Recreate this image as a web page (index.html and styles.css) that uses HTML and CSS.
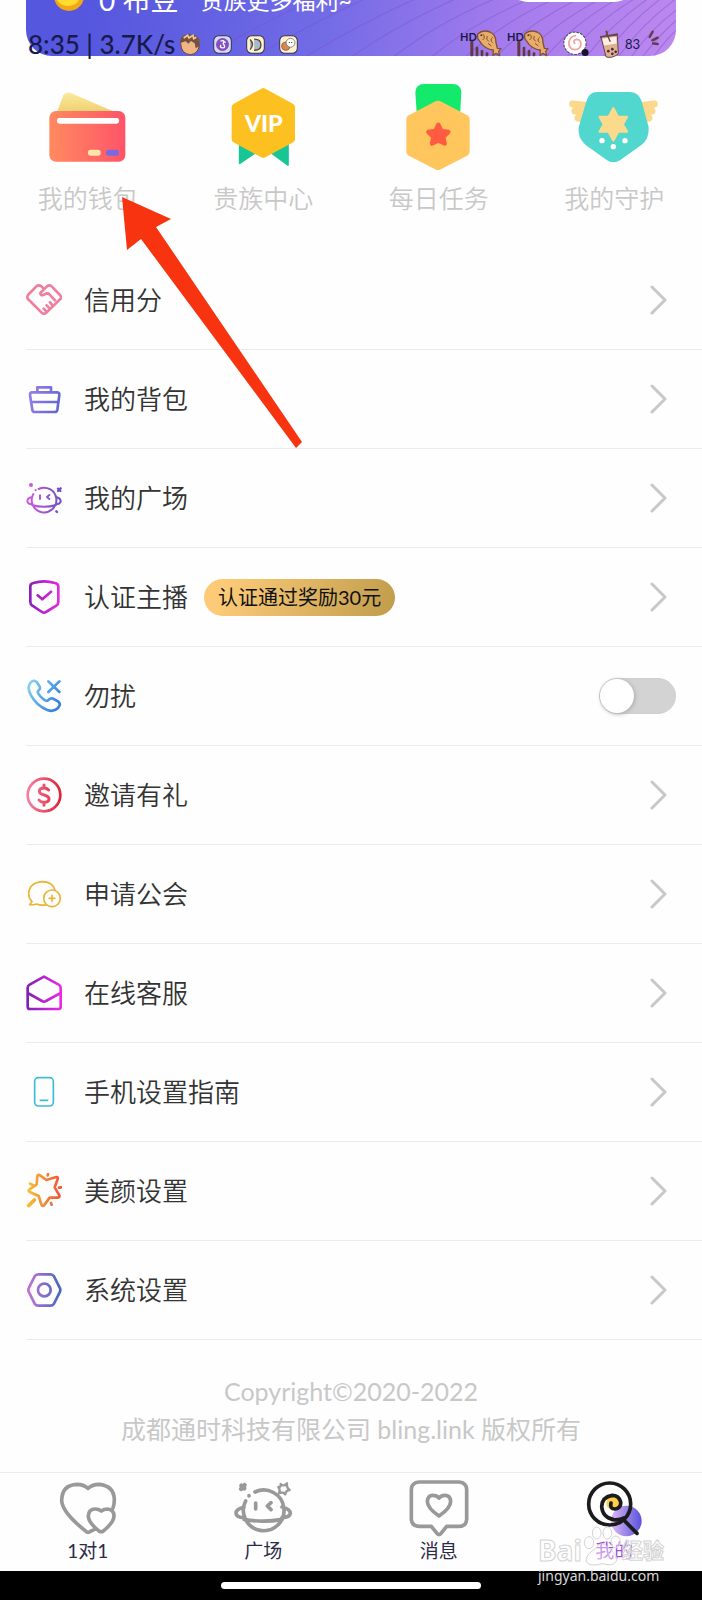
FILE: index.html
```
<!DOCTYPE html>
<html lang="zh-CN">
<head>
    <meta charset="UTF-8">
    <meta name="viewport" content="width=device-width, initial-scale=1.0">
    <title>我的</title>
    <link rel="stylesheet" href="styles.css">
</head>
<body>
    <!-- shared gradients for the row icons -->
    <svg class="defs" width="0" height="0" aria-hidden="true">
        <defs>
            <linearGradient id="g-blue" gradientUnits="userSpaceOnUse" x1="0" y1="0" x2="108" y2="40"><stop stop-color="#a384ec"/><stop offset="1" stop-color="#6468d2"/></linearGradient>
            <linearGradient id="g-planet" gradientUnits="userSpaceOnUse" x1="0" y1="0" x2="108" y2="0"><stop stop-color="#d25fdc"/><stop offset="1" stop-color="#6b4fc0"/></linearGradient>
            <linearGradient id="g-magenta" gradientUnits="userSpaceOnUse" x1="0" y1="0" x2="108" y2="0"><stop stop-color="#7d1fb4"/><stop offset="1" stop-color="#ee2be6"/></linearGradient>
            <linearGradient id="g-call" gradientUnits="userSpaceOnUse" x1="0" y1="0" x2="108" y2="60"><stop stop-color="#8fdcf2"/><stop offset="1" stop-color="#347fe0"/></linearGradient>
            <linearGradient id="g-red" gradientUnits="userSpaceOnUse" x1="0" y1="0" x2="108" y2="0"><stop stop-color="#f583a8"/><stop offset="1" stop-color="#dc2030"/></linearGradient>
            <linearGradient id="g-fire" gradientUnits="userSpaceOnUse" x1="0" y1="0" x2="108" y2="0"><stop stop-color="#f6c534"/><stop offset="1" stop-color="#f0503c"/></linearGradient>
            <linearGradient id="g-hex" gradientUnits="userSpaceOnUse" x1="0" y1="0" x2="108" y2="0"><stop stop-color="#cc70d8"/><stop offset="1" stop-color="#3f68bd"/></linearGradient>
            <linearGradient id="g-card" x1="0" y1="0" x2="1" y2="0"><stop stop-color="#ff8a60"/><stop offset="1" stop-color="#ff5468"/></linearGradient>
            <linearGradient id="g-paper" x1="0" y1="0" x2="0" y2="1"><stop stop-color="#fbea9a"/><stop offset="1" stop-color="#efce70"/></linearGradient>
            <linearGradient id="g-ball" x1="0" y1="0" x2="1" y2="0"><stop stop-color="#dcb8f6"/><stop offset="1" stop-color="#5a52dc"/></linearGradient>
            <symbol id="chevron" viewBox="0 0 18 32"><path d="M2 3l13 13L2 29" fill="none" stroke="#c8c8c8" stroke-width="3" stroke-linecap="round" stroke-linejoin="round"/></symbol>
            <symbol id="fish" viewBox="0 0 126 84">
                <g fill="#613943"><rect x="31" y="32" width="9" height="47" rx="3"/><rect x="47" y="50" width="8" height="29" rx="3"/><rect x="62" y="60" width="8" height="19" rx="3"/><rect x="77" y="67" width="8" height="12" rx="3"/></g>
                <path d="M53 12Q68-2 90 6Q108 14 108 38L112 55L123 56L116 64L119 77L108 70L99 76L100 60Q80 58 66 43L53 25Z" fill="#e8ae69" stroke="#805037" stroke-width="4" stroke-linejoin="round"/>
                <path d="M68 12q10 9 0 18M82 18q-6 10 4 16M98 22q-10 8 0 16M84 40l10 8" fill="none" stroke="#805037" stroke-width="3"/>
                <circle cx="64" cy="16" r="3" fill="#543028"/>
            </symbol>
        </defs>
    </svg>

    <header class="hero">
        <svg class="hero-lines" viewBox="0 0 649 56" preserveAspectRatio="xMaxYMax slice" aria-hidden="true">
            <g fill="none" stroke="#7b4fc4" stroke-opacity=".45" stroke-width="1">
                <path d="M180 56Q240 20 300-6M230 56Q290 20 350-6M280 56Q340 20 400-6M326 56Q375 22 440-6M368 56Q415 20 480-6M406 56Q450 20 515-6M440 56Q480 18 540-6M470 56Q505 20 562-6M497 56Q530 20 584-6M520 56Q550 20 600-6M541 56Q570 20 616-6M560 56Q586 22 628-6M577 56Q602 22 640-6M592 56Q615 24 650-2M605 56Q625 28 652 8M616 56Q635 32 652 18M627 56Q642 36 652 28"/>
            </g>
        </svg>
        <div class="balance">
            <svg class="coin" viewBox="0 0 32 32" aria-hidden="true"><circle cx="16" cy="16" r="15" fill="#f3a813"/><circle cx="15" cy="13" r="13" fill="#ffdc2e"/></svg>
            <span class="balance-amount">0 布豆</span>
            <span class="balance-tip">贵族更多福利~</span>
            <a class="balance-link" href="#" aria-label="贵族"></a>
        </div>
        <div class="status">
            <span class="status-text">8:35 | 3.7K/s</span>
            <svg class="status-app" viewBox="0 0 66 70" aria-hidden="true"><path d="M5 33Q2 8 30 8Q64 5 61 38Q58 65 34 67Q6 65 5 33Z" fill="#efb583" stroke="#6d493d" stroke-width="3"/><path d="M4 32Q4 10 24 9L30 3L33 9Q64 8 60 42L50 48L47 33L36 26L28 34L20 27Z" fill="#75513f"/><path d="M14 17l12-8 4 8 12-8 2 10 8-4" fill="none" stroke="#f1cb91" stroke-width="5"/></svg>
            <svg class="status-app small" viewBox="0 0 56 56" aria-hidden="true"><rect x="2" y="2" width="52" height="52" rx="15" fill="#d5daf1" stroke="#343451" stroke-width="3"/><circle cx="28" cy="28" r="19" fill="#854dc4"/><path d="M22 18q14-5 8 7q10 13-3 13q-9-2-3-9M32 18l5 5" fill="none" stroke="#fff" stroke-width="4"/></svg>
            <svg class="status-app small" viewBox="0 0 56 56" aria-hidden="true"><rect x="2" y="2" width="52" height="52" rx="15" fill="#fff1cd" stroke="#343451" stroke-width="3"/><path d="M12 13q14 14 0 30M24 12q20 0 20 17t-20 16" fill="#a9bbc2" stroke="#4a4942" stroke-width="4"/></svg>
            <svg class="status-app small" viewBox="0 0 56 56" aria-hidden="true"><rect x="2" y="2" width="52" height="52" rx="15" fill="#fff1cd" stroke="#343451" stroke-width="3"/><circle cx="20" cy="33" r="12" fill="#dc8750" stroke="#5e4438" stroke-width="2"/><circle cx="34" cy="23" r="13" fill="#fff" stroke="#5e5952" stroke-width="2"/><path d="M29 22h3M36 22h3" stroke="#333" stroke-width="3"/></svg>
            <span class="signal"><b>HD</b><svg viewBox="0 0 126 84" aria-hidden="true"><use href="#fish"/></svg></span>
            <span class="signal"><b>HD</b><svg viewBox="0 0 126 84" aria-hidden="true"><use href="#fish"/></svg></span>
            <svg class="status-wifi" viewBox="0 0 80 80" aria-hidden="true"><circle cx="37" cy="38" r="32" fill="#fff" stroke="#4b4770" stroke-width="3" stroke-dasharray="8 3"/><path d="M37 40q-8-10 4-13q14 0 13 15q-3 15-19 14q-18-4-15-23q5-17 20-17" fill="none" stroke="#f0a4a4" stroke-width="5"/><circle cx="66" cy="64" r="10" fill="#171527"/></svg>
            <svg class="status-battery" viewBox="0 0 66 86" aria-hidden="true"><path d="M6 21L60 12M28 15L25 2" stroke="#674452" stroke-width="6"/><path d="M9 21L58 15L61 71Q42 86 24 80Z" fill="#ddb191" stroke="#674452" stroke-width="3"/><path d="M13 26L55 20L56 40L18 46Z" fill="#fff0e4"/><path d="M29 17l8 18" stroke="#674452" stroke-width="4"/><g fill="#4b2b2c"><circle cx="31" cy="63" r="4"/><circle cx="43" cy="57" r="4"/><circle cx="43" cy="71" r="4"/><circle cx="53" cy="65" r="4"/></g></svg>
            <span class="status-percent">83</span>
            <svg class="status-charge" viewBox="0 0 36 48" aria-hidden="true"><path d="M5 21L14 5M13 31L29 23M15 40L29 42" stroke="#5f3b4c" stroke-width="7" stroke-linecap="round"/></svg>
        </div>
    </header>

    <nav class="quick">
        <a href="#">
            <svg viewBox="0 0 288 288" aria-hidden="true">
                <path d="M50 100L70 46Q76 34 92 39L230 98Z" fill="url(#g-paper)"/>
                <rect x="28" y="93" width="228" height="152" rx="20" fill="url(#g-card)"/>
                <rect x="51" y="114" width="186" height="17" rx="7" fill="#fff"/>
                <rect x="144" y="209" width="38" height="18" rx="8" fill="#ffe5a8"/>
                <rect x="198" y="209" width="39" height="18" rx="8" fill="#7c68e2"/>
            </svg>
            <span>我的钱包</span>
        </a>
        <a href="#">
            <svg viewBox="0 0 288 288" aria-hidden="true">
                <path d="M74 180V250L124 216ZM168 218L219 255V180Z" fill="#17c694" stroke="#17c694" stroke-width="5" stroke-linejoin="round"/>
                <path d="M145 34L230 81V178L145 224L60 178V81Z" fill="#fcc121" stroke="#fcc121" stroke-width="20" stroke-linejoin="round"/>
                <text x="146" y="157" class="vip">VIP</text>
            </svg>
            <span>贵族中心</span>
        </a>
        <a href="#">
            <svg viewBox="0 0 288 288" aria-hidden="true">
                <path d="M73 38Q74 12 99 12H185Q210 12 211 38L207 110H78Z" fill="#13e96b"/>
                <path d="M141 78L220 119V214L141 254L62 214V119Z" fill="#ffc65e" stroke="#ffc65e" stroke-width="32" stroke-linejoin="round"/>
                <path d="M142 134l9 19 21 3-15 15 4 20-19-9-19 9 4-20-15-15 21-3z" fill="#ff5b40" stroke="#ff5b40" stroke-width="13" stroke-linejoin="round"/>
            </svg>
            <span>每日任务</span>
        </a>
        <a href="#">
            <svg viewBox="0 0 288 288" aria-hidden="true">
                <g stroke="#fbd88a" stroke-width="21" stroke-linecap="round"><path d="M20 72L66 77M27 93L60 97M36 114L52 117M265 72L220 77M258 93L226 97M249 114L233 117"/></g>
                <path d="M94 36H190Q218 36 227 64L248 142Q250 178 226 195L164 239Q142 254 121 239L59 195Q34 174 38 142L61 64Q69 36 94 36Z" fill="#51d7ce"/>
                <path d="M142 85l14 26h27l-13 22 13 22h-27l-14 26-14-26h-27l13-22-13-22h27z" fill="#fcda8b" stroke="#fcda8b" stroke-width="7" stroke-linejoin="round"/>
                <g fill="#fff"><circle cx="108" cy="182" r="8"/><circle cx="142" cy="200" r="8"/><circle cx="177" cy="182" r="8"/></g>
            </svg>
            <span>我的守护</span>
        </a>
    </nav>

    <ul class="menu">
        <li><a class="row" href="#">
            <svg class="icon" viewBox="0 0 108 108" stroke="#ee7f9e" aria-hidden="true"><path d="M54 20L46 13Q38 7 31 13L6 39Q2 45 6 51L47 92Q54 98 61 92L103 51Q108 45 102 39L77 13Q70 7 63 13L43 33Q43 41 52 39L62 34L68 35L87 55M72 61L80 71M62 70L71 80M53 80L61 89"/></svg>
            <span class="title">信用分</span>
            <svg class="arrow"><use href="#chevron"/></svg>
        </a></li>
        <li><a class="row" href="#">
            <svg class="icon" viewBox="0 0 108 108" stroke="url(#g-blue)" aria-hidden="true"><path d="M34 34V19H75V34M18 34H92Q101 34 100 42L94 87Q93 93 86 93H26Q20 93 19 87L12 42Q12 34 18 34ZM15 63H96"/></svg>
            <span class="title">我的背包</span>
            <svg class="arrow"><use href="#chevron"/></svg>
        </a></li>
        <li><a class="row" href="#">
            <svg class="icon" viewBox="0 0 108 108" stroke="url(#g-planet)" aria-hidden="true"><path stroke-width="6" d="M38 27A37 37 0 1 1 22 42M18 75Q54 86 90 75M19 50Q3 54 4 65Q8 74 19 73M89 50Q105 54 104 65Q100 74 89 73M42 46V57M70 45L63 51L70 57M29 30L29 31"/><path d="M13 13l4 4M17 13l-4 4M96 26l7 7M104 25l-8 8M91 94l2 2" stroke-width="7"/></svg>
            <span class="title">我的广场</span>
            <svg class="arrow"><use href="#chevron"/></svg>
        </a></li>
        <li><a class="row" href="#">
            <svg class="icon" viewBox="0 0 108 108" stroke="url(#g-magenta)" aria-hidden="true"><path d="M22 12Q54 2 87 12Q96 14 97 22V68Q97 76 91 80L60 99Q54 103 48 99L19 80Q13 76 13 68V22Q13 14 22 12ZM35 49L49 61L75 38"/></svg>
            <span class="title">认证主播</span>
            <span class="badge">认证通过奖励30元</span>
            <svg class="arrow"><use href="#chevron"/></svg>
        </a></li>
        <li><label class="row" for="dnd">
            <svg class="icon" viewBox="0 0 108 108" stroke="url(#g-call)" aria-hidden="true"><path d="M13 15Q23 3 32 12L40 24Q45 32 37 38Q31 43 47 59Q59 71 65 68Q73 58 83 63L96 70Q107 78 96 90Q83 103 64 96Q32 83 15 52Q2 28 13 15ZM67 10L100 42M100 10L67 42"/></svg>
            <span class="title">勿扰</span>
            <input class="switch" type="checkbox" id="dnd">
        </label></li>
        <li><a class="row" href="#">
            <svg class="icon" viewBox="0 0 108 108" stroke="url(#g-red)" aria-hidden="true"><circle cx="54" cy="54" r="49"/><path stroke-width="9" d="M68 39Q62 33 54 33Q40 33 40 43Q40 51 54 54Q69 58 69 66Q69 76 54 76Q44 76 39 69M54 24V33M54 76V85"/></svg>
            <span class="title">邀请有礼</span>
            <svg class="arrow"><use href="#chevron"/></svg>
        </a></li>
        <li><a class="row" href="#">
            <svg class="icon thin" viewBox="0 0 108 108" stroke="#e8b535" aria-hidden="true"><path d="M87 43Q80 17 48 17Q10 20 8 53Q8 66 18 77L11 86Q25 87 32 84Q42 89 61 87"/><circle cx="78" cy="67" r="25"/><path d="M78 58V76M69 67H87"/></svg>
            <span class="title">申请公会</span>
            <svg class="arrow"><use href="#chevron"/></svg>
        </a></li>
        <li><a class="row" href="#">
            <svg class="icon" viewBox="0 0 108 108" stroke="url(#g-magenta)" aria-hidden="true"><path d="M54 5L98 29Q104 32 104 39V95Q104 102 97 102H12Q5 102 5 95V39Q5 32 11 29ZM5 54L48 78Q54 82 60 78L104 54"/></svg>
            <span class="title">在线客服</span>
            <svg class="arrow"><use href="#chevron"/></svg>
        </a></li>
        <li><a class="row" href="#">
            <svg class="icon thin" viewBox="0 0 108 108" stroke="#3dbbd9" aria-hidden="true"><rect x="26" y="11" width="56" height="85" rx="11"/><path d="M43 79H65"/></svg>
            <span class="title">手机设置指南</span>
            <svg class="arrow"><use href="#chevron"/></svg>
        </a></li>
        <li><a class="row" href="#">
            <svg class="icon" viewBox="0 0 108 108" stroke="url(#g-fire)" aria-hidden="true"><path d="M42 7L61 21L91 12Q97 12 95 18L86 43L100 67Q102 74 95 74L71 74L54 97Q48 101 46 94L38 69L11 57Q5 53 11 49L32 34L34 9Q36 3 42 7ZM66 3L65 7M99 44L105 43M75 90L77 95M12 32L20 36"/><path stroke-width="11" d="M25 81L8 98"/></svg>
            <span class="title">美颜设置</span>
            <svg class="arrow"><use href="#chevron"/></svg>
        </a></li>
        <li><a class="row" href="#">
            <svg class="icon" viewBox="0 0 108 108" stroke="url(#g-hex)" aria-hidden="true"><path d="M37 7H73Q80 7 84 13L101 47Q105 54 101 61L84 95Q80 101 73 101H37Q30 101 26 95L9 61Q5 54 9 47L26 13Q30 7 37 7Z"/><circle cx="55" cy="54" r="19"/></svg>
            <span class="title">系统设置</span>
            <svg class="arrow"><use href="#chevron"/></svg>
        </a></li>
    </ul>

    <footer class="copyright">
        <p>Copyright©2020-2022</p>
        <p>成都通时科技有限公司 bling.link 版权所有</p>
    </footer>

    <nav class="tabs">
        <a href="#">
            <svg viewBox="0 0 180 180" aria-hidden="true"><path d="M109 151L96 158Q91 162 85 158Q12 100 11 64Q12 18 57 16Q76 16 90 28Q104 16 123 16Q168 20 169 62Q169 75 165 87M130 158L125 158Q90 130 91 111Q92 90 112 90Q122 90 130 96Q138 90 148 90Q168 92 168 111Q168 130 134 158Z"/></svg>
            <span>1对1</span>
        </a>
        <a href="#">
            <svg viewBox="0 0 180 180" aria-hidden="true"><path d="M66 39A61 61 0 1 1 38 66M33 121Q90 132 148 121M33 84Q9 90 9 103Q10 115 33 116M147 84Q172 90 172 103Q170 115 147 116M68 72V90M114 71L103 81L114 92M48 50V51"/><path d="M25 20L34 28M35 18L24 30" stroke-width="13"/><path stroke-width="7" d="M143 15Q151 24 162 13Q160 26 170 33Q158 34 157 46Q148 37 138 43Q143 32 136 24Q145 25 143 15Z"/></svg>
            <span>广场</span>
        </a>
        <a href="#">
            <svg viewBox="0 0 180 180" aria-hidden="true"><path d="M30 9H150Q172 11 173 31V121Q172 142 150 142H113L96 163Q90 171 84 163L67 142H30Q8 141 7 121V31Q8 11 30 9ZM90 111Q55 88 55 67Q57 48 72 49Q83 49 90 57Q97 49 108 49Q124 49 125 67Q125 88 90 111Z"/></svg>
            <span>消息</span>
        </a>
        <a class="active" href="#">
            <svg viewBox="0 0 180 180" aria-hidden="true"><circle class="ball" cx="127" cy="126" r="46"/><circle class="yolk" cx="88" cy="72" r="21"/><circle cx="77" cy="75" r="63"/><path d="M81 72Q77 90 93 90Q112 87 110 69Q105 49 84 49Q54 54 53 83Q56 116 89 122Q106 124 120 117M121 125L159 163"/></svg>
            <span>我的</span>
        </a>
    </nav>
    <div class="homebar"><span></span></div>

    <svg class="pointer" viewBox="0 0 182 253" aria-hidden="true"><path d="M1 1L50 23L35 31L181 246L175 252L20 43L6 54Z" fill="#f73310"/></svg>

    <div class="watermark">
        <div class="watermark-logo">
            <span>Bai</span>
            <svg viewBox="0 0 120 120" aria-hidden="true"><g fill="#fff" fill-opacity=".4" stroke="#d4d4d4" stroke-width="3"><ellipse cx="21" cy="50" rx="14" ry="18"/><ellipse cx="44" cy="21" rx="13" ry="18"/><ellipse cx="76" cy="21" rx="13" ry="18"/><ellipse cx="101" cy="48" rx="14" ry="18"/><path d="M40 68Q58 40 78 64Q112 92 102 108Q90 122 62 113Q26 123 13 108Q8 88 40 68Z"/></g><text x="60" y="106">du</text></svg>
            <span>经验</span>
        </div>
        <div class="watermark-url">jingyan.baidu.com</div>
    </div>
</body>
</html>
```
FILE: styles.css
```
* {
    box-sizing: border-box;
}
body {
    position: relative;
    display: flex;
    flex-direction: column;
    min-height: 100vh;
    margin: 0;
    background-color: #fefefe;
    color: #333;
    font-family: Lato, "Noto Sans CJK SC", sans-serif;
}
a {
    color: inherit;
    text-decoration: none;
}
.defs {
    position: absolute;
}

/* purple card + status bar on top of it */
.hero {
    position: relative;
    height: 56px;
    margin: 0 26px;
    border-radius: 0 0 26px 26px;
    background: linear-gradient(100deg, #5557de 10%, #716be6 45%, #a67ced 75%, #bc88ee);
}
.hero-lines {
    position: absolute;
    width: 100%;
    height: 100%;
    border-radius: 0 0 26px 26px;
}
.balance {
    position: relative;
    display: flex;
    height: 20px;
    padding: 0 40px 0 27px;
    overflow: hidden;
    color: #fff;
    line-height: 40px;
    white-space: nowrap;
}
.balance > * {
    margin-top: -20px;
}
.coin {
    width: 32px;
    height: 32px;
    margin-right: 14px;
}
.balance-amount {
    margin-right: 22px;
    font-size: 28px;
}
.balance-tip {
    font-size: 23px;
}
.balance > .balance-link {
    width: 130px;
    height: 44px;
    margin-top: -42px;
    margin-left: auto;
    border-radius: 22px;
    background-color: #fff;
}
.status {
    position: absolute;
    top: 28px;
    left: 2px;
    right: 16px;
    display: flex;
    align-items: center;
    height: 32px;
    color: #18194c;
}
.status-text {
    margin-right: 4px;
    font-size: 26px;
    font-weight: 500;
    line-height: 30px;
    white-space: nowrap;
}
.status-app {
    width: 22px;
    height: 24px;
    margin-right: 12px;
}
.status-app.small {
    width: 19px;
    height: 19px;
    margin-right: 14px;
}
.signal {
    display: flex;
    margin-right: 5px;
}
.status-app + .signal {
    margin-left: auto;
}
.signal b {
    width: 16px;
    margin-right: -16px;
    font-size: 11px;
}
.signal svg {
    width: 42px;
    height: 28px;
}
.status-wifi {
    width: 28px;
    height: 28px;
    margin: 0 8px;
}
.status-battery {
    width: 22px;
    height: 29px;
}
.status-percent {
    margin: 0 8px 0 5px;
    font-size: 13px;
}
.status-charge {
    width: 12px;
    height: 16px;
    margin-bottom: 12px;
}

/* four shortcuts */
.quick {
    display: grid;
    grid-template-columns: repeat(4, 1fr);
    padding: 24px 0 35px;
}
.quick a {
    display: flex;
    flex-direction: column;
    align-items: center;
    gap: 4px;
    color: #c8c8c8;
    font-size: 25px;
    font-weight: 350;
    line-height: 36px;
}
.quick svg {
    width: 96px;
    height: 96px;
}
.vip {
    fill: #fff;
    font-family: Lato, sans-serif;
    font-size: 70px;
    font-weight: 900;
    text-anchor: middle;
}

/* settings list */
.menu {
    margin: 0;
    padding: 0 0 0 26px;
    list-style: none;
}
.row {
    display: flex;
    align-items: center;
    height: 99px;
    padding-right: 26px;
    border-bottom: 1px solid #ebebeb;
}
.icon {
    width: 36px;
    height: 36px;
    margin-right: 22px;
    fill: none;
    stroke-width: 8;
    stroke-linecap: round;
    stroke-linejoin: round;
}
.icon.thin {
    stroke-width: 5;
}
.title {
    padding-bottom: 4px;
    font-size: 26px;
    font-weight: 350;
}
.badge {
    margin-left: 16px;
    padding: 0 14px;
    border-radius: 19px;
    background: linear-gradient(110deg, #fdcb78 10%, #bf9c4b);
    color: #111;
    font-size: 20px;
    line-height: 37px;
}
.arrow {
    width: 18px;
    height: 32px;
    margin-left: auto;
    margin-right: 8px;
}
.switch {
    width: 77px;
    height: 36px;
    margin: 0 0 0 auto;
    border: 1px solid #cfcfcf;
    border-radius: 18px;
    background-color: #d3d3d3;
    appearance: none;
}
.switch::before {
    content: "";
    display: block;
    width: 34px;
    height: 34px;
    border-radius: 50%;
    background-color: #fff;
    box-shadow: 1px 1px 4px #aaa;
}
.switch:checked {
    background-color: #8f6ae8;
}
.switch:checked::before {
    margin-left: auto;
}

.copyright {
    padding: 32px 0 24px;
    color: #c8c8c8;
    font-size: 25px;
    line-height: 38px;
    text-align: center;
}
.copyright p {
    margin: 0;
}

/* bottom tabs */
.tabs {
    display: grid;
    grid-template-columns: repeat(4, 1fr);
    height: 99px;
    margin-top: auto;
    padding-top: 6px;
    border-top: 1px solid #ececec;
}
.tabs a {
    display: flex;
    flex-direction: column;
    align-items: center;
    color: #2b2b48;
    font-size: 19px;
    line-height: 24px;
}
.tabs svg {
    width: 60px;
    height: 60px;
    fill: none;
    stroke: #999;
    stroke-width: 11;
    stroke-linecap: round;
    stroke-linejoin: round;
}
.tabs .active {
    color: #a150dc;
}
.tabs .active svg {
    stroke: #1b1b1b;
}
.active .ball {
    fill: url(#g-ball);
    stroke: none;
}
.active .yolk {
    fill: #ffcf4a;
    stroke: none;
}
.homebar {
    display: flex;
    justify-content: center;
    height: 29px;
    padding-top: 11px;
    background-color: #000;
}
.homebar span {
    width: 37%;
    height: 7px;
    border-radius: 4px;
    background-color: #fff;
}

/* overlays */
.pointer {
    position: absolute;
    top: 196px;
    left: 121px;
    width: 182px;
    height: 253px;
}
.watermark {
    position: absolute;
    right: 38px;
    bottom: 14px;
    width: 126px;
    color: #fff;
    font-family: "Noto Sans", "Noto Sans CJK SC", sans-serif;
}
.watermark-logo {
    display: flex;
    align-items: flex-end;
    justify-content: space-between;
    color: rgba(255, 255, 255, 0.4);
    font-size: 28px;
    font-weight: bold;
    line-height: 32px;
    -webkit-text-stroke: 1px #d4d4d4;
}
.watermark-logo svg {
    width: 40px;
    height: 40px;
}
.watermark-logo text {
    fill: rgba(255, 255, 255, 0.3);
    font-size: 44px;
    text-anchor: middle;
}
.watermark-logo span:last-child {
    font-size: 21px;
}
.watermark-url {
    color: #d8d8d8;
    font-size: 14px;
    line-height: 20px;
}
```
